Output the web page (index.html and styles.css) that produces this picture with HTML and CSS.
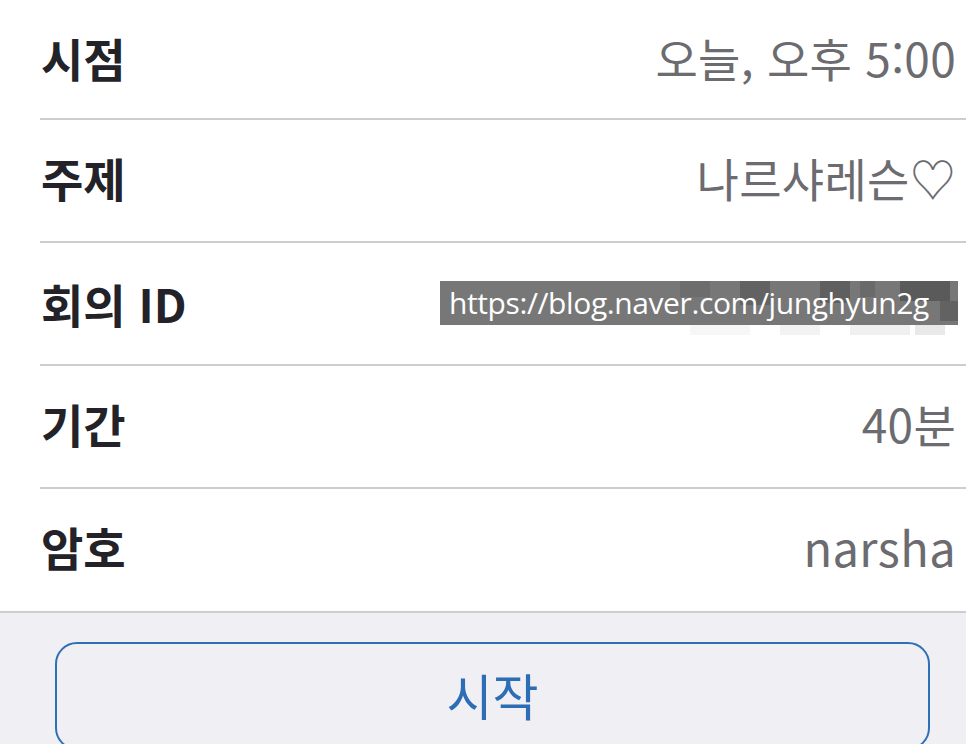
FILE: index.html
```html
<!DOCTYPE html>
<html lang="ko">
<head>
<meta charset="utf-8">
<link rel="stylesheet" href="styles.css">
</head>
<body>
<main class="sheet">
  <section class="list">
    <div class="row first">
      <span class="label">시점</span>
      <span class="value">오늘, 오후 5:00</span>
    </div>
    <div class="row">
      <span class="label">주제</span>
      <span class="value">나르샤레슨♡</span>
    </div>
    <div class="row id-row">
      <span class="label">회의 ID</span>
      <span class="masked">
        <span class="below"><i class="b1"></i><i class="b2"></i><i class="b3"></i><i class="b4"></i></span>
        <span class="url">
          <i class="d1"></i><i class="d2"></i><i class="d3"></i><i class="d4"></i><i class="d5"></i><i class="d6"></i>
          <span class="url-text">https://blog.naver.com/junghyun2g</span>
        </span>
      </span>
    </div>
    <div class="row">
      <span class="label">기간</span>
      <span class="value">40분</span>
    </div>
    <div class="row last">
      <span class="label">암호</span>
      <span class="value latin">narsha</span>
    </div>
  </section>
  <section class="actions">
    <button class="start">시작</button>
  </section>
</main>
</body>
</html>
```
FILE: styles.css
```css
html, body {
  margin: 0;
  padding: 0;
  background: #ffffff;
  overflow: hidden;
}
body {
  font-family: "Noto Sans CJK KR", "Noto Sans", sans-serif;
  width: 966px;
  height: 744px;
}
.sheet {
  display: flex;
  flex-direction: column;
  height: 744px;
}
.list {
  padding-left: 40px;
  background: #ffffff;
  border-bottom: 2px solid #cdcdd0;
}
.row {
  display: flex;
  align-items: center;
  justify-content: space-between;
  box-sizing: border-box;
  height: 123px;
  border-bottom: 2px solid #cdcdd0;
  padding: 0 10px 8px 0;
}
.row.first {
  height: 120px;
  padding-bottom: 4px;
}
.row.id-row {
  padding-bottom: 2px;
}
.row.last {
  border-bottom: none;
  height: 122px;
}
.label {
  font-weight: 700;
  font-size: 46px;
  color: #222228;
  padding-left: 1px;
}
.value {
  font-weight: 400;
  font-size: 46px;
  color: #6b6b70;
  letter-spacing: 0.3px;
}
.value.latin {
  font-size: 47px;
  letter-spacing: 0.4px;
}
.masked {
  position: relative;
  display: block;
  margin-right: -2px;
}
.url {
  position: relative;
  display: block;
  width: 518px;
  box-sizing: border-box;
  background: #777777;
  color: #ffffff;
  font-family: "Open Sans", "Noto Sans", sans-serif;
  font-size: 30px;
  line-height: 44px;
  height: 44px;
  padding: 0 0 0 9px;
  letter-spacing: -0.4px;
  overflow: hidden;
}
.url-text {
  position: relative;
}
.url i {
  position: absolute;
  display: block;
  top: 0;
  height: 16px;
  background: #666666;
}
.url .d1 { left: 240px; width: 30px; background: #6d6d6d; }
.url .d2 { left: 300px; width: 30px; height: 24px; background: #626262; }
.url .d3 { left: 380px; width: 30px; background: #5f5f5f; height: 22px; }
.url .d4 { left: 420px; width: 15px; background: #6a6a6a; }
.url .d5 { left: 460px; width: 50px; background: #5a5a5a; height: 20px; }
.url .d6 { left: 500px; width: 18px; top: 20px; height: 20px; background: #626262; }
.below {
  position: absolute;
  left: 0;
  right: 0;
  top: 44px;
  height: 10px;
}
.below i {
  position: absolute;
  display: block;
  top: 0;
  height: 10px;
  background: #f3f3f3;
}
.below .b1 { left: 250px; width: 60px; background: #f7f7f7; }
.below .b2 { left: 340px; width: 40px; }
.below .b3 { left: 410px; width: 60px; background: #f0f0f0; }
.below .b4 { left: 475px; width: 30px; background: #e9e9e9; }
.actions {
  flex: 1;
  background: #efeff4;
  padding: 29px 36px 0 55px;
}
.start {
  display: flex;
  align-items: center;
  justify-content: center;
  width: 100%;
  height: 108px;
  border: 2px solid #2f6fb6;
  border-radius: 22px;
  background: #efeff4;
  color: #2c6db5;
  font-family: "Noto Sans CJK KR", "Noto Sans", sans-serif;
  font-size: 50px;
  font-weight: 400;
  padding: 0 0 4px 0;
}
```
